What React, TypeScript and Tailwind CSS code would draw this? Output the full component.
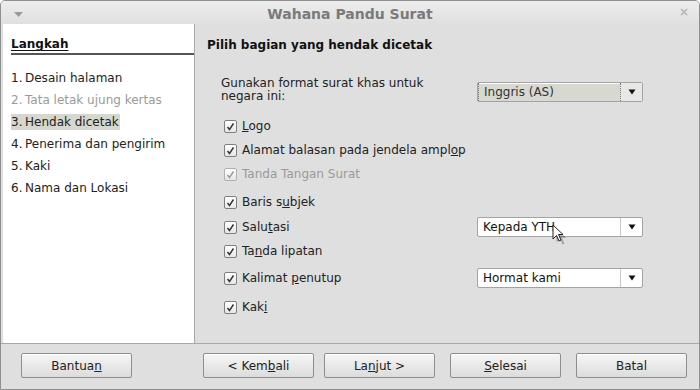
import React from "react";

const steps = [
  { n: "1.", label: "Desain halaman" },
  { n: "2.", label: "Tata letak ujung kertas", disabled: true },
  { n: "3.", label: "Hendak dicetak", active: true },
  { n: "4.", label: "Penerima dan pengirim" },
  { n: "5.", label: "Kaki" },
  { n: "6.", label: "Nama dan Lokasi" },
];

const CheckBox: React.FC<{ disabled?: boolean }> = ({ disabled }) => (
  <span
    className={`flex h-[13px] w-[13px] shrink-0 items-center justify-center rounded-[2px] border bg-gradient-to-b from-white to-[#e6e6e6] ${
      disabled ? "border-[#b0b0b0]" : "border-[#7f7f7f]"
    }`}
  >
    <svg width="9" height="9" viewBox="0 0 9 9">
      <path
        d="M1.5 5 L3.5 7.5 L7.5 1.5"
        fill="none"
        stroke={disabled ? "#9a9a9a" : "#333"}
        strokeWidth="1.4"
      />
    </svg>
  </span>
);

const Row: React.FC<{ children: React.ReactNode; disabled?: boolean; className?: string; right?: React.ReactNode }> = ({
  children,
  disabled,
  className = "",
  right,
}) => (
  <div className={`flex items-center ${className}`}>
    <div className="flex w-[256px] shrink-0 items-center gap-[5px] whitespace-nowrap pl-[17px]">
      <CheckBox disabled={disabled} />
      <span className={disabled ? "text-[#9a9a9a]" : "text-[#222]"}>{children}</span>
    </div>
    {right}
  </div>
);

const Combo: React.FC<{ value: string; tinted?: boolean }> = ({ value, tinted }) => (
  <div
    className={`flex h-[20px] w-[166px] items-stretch rounded-[2px] border border-[#a3a3a3] shadow-[inset_0_1px_0_#fff] ${
      tinted ? "bg-[#d7d9d1]" : "bg-white"
    }`}
  >
    <div
      className={`flex flex-1 items-center pl-[5px] ${
        tinted ? "border-l border-dotted border-[#777] pl-[2px] text-[#333]" : "text-[#111]"
      }`}
    >
      {value}
    </div>
    <div
      className={`flex w-[22px] items-center justify-center border-l ${
        tinted ? "border-dotted border-[#777] bg-[#e8e8e6]" : "border-[#c8c8c8]"
      }`}
    >
      <svg width="8" height="6" viewBox="0 0 8 6">
        <path d="M0.5 0.5 H7.5 L4 5.5 Z" fill="#111" />
      </svg>
    </div>
  </div>
);

const Btn: React.FC<{ children: React.ReactNode; className?: string }> = ({ children, className = "" }) => (
  <button
    className={`flex h-[25px] w-[111px] items-center justify-center rounded-[2px] border border-[#8e8e8e] bg-gradient-to-b from-[#f6f6f6] to-[#dcdcdc] text-[#222] shadow-[inset_0_1px_0_#fff] ${className}`}
  >
    {children}
  </button>
);

export default function App() {
  return (
    <div
      className="relative flex h-[390px] w-[700px] flex-col overflow-hidden rounded-t-[5px] border border-[#8f8f8f] bg-[#dfdfdf] text-[12px] leading-none"
      style={{ fontFamily: '"DejaVu Sans", "Liberation Sans", sans-serif' }}
    >
      {/* title bar */}
      <div className="relative flex h-[23px] shrink-0 items-center justify-center bg-gradient-to-b from-[#ededed] to-[#e0e0e0]">
        <svg className="absolute left-[13px] top-[11px]" width="9" height="5" viewBox="0 0 9 5">
          <path d="M0 0 H9 L4.5 5 Z" fill="#9a9a9a" />
        </svg>
        <span className="pt-[2px] text-[14px] font-bold text-[#7a7a7a]">Wahana Pandu Surat</span>
        <span className="absolute right-[10px] top-[5px] text-[12px] font-bold text-[#b5b5b5]">×</span>
      </div>

      {/* body */}
      <div className="flex h-[319px] shrink-0 pl-[2px]">
        {/* steps */}
        <div className="flex w-[192px] shrink-0 flex-col border-r border-[#a8a8a8] bg-white pl-[8px]">
          <div className="mt-[14px] border-b-2 border-[#555] pb-[3px] font-bold text-[#111] underline underline-offset-2 decoration-1">
            Langkah
          </div>
          <div className="mt-[15px] flex flex-col gap-[6px]">
            {steps.map((s) => (
              <div
                key={s.n}
                className={`flex h-[16px] w-fit items-center pr-[1px] ${
                  s.active ? "bg-[#d6d8d0]" : ""
                } ${s.disabled ? "text-[#9a9a9a]" : "text-[#222]"}`}
              >
                <span className="w-[14px]">{s.n}</span>
                <span>{s.label}</span>
              </div>
            ))}
          </div>
        </div>

        {/* content */}
        <div className="flex flex-1 flex-col pl-[12px]">
          <div className="mt-[15px] font-bold text-[#111]">Pilih bagian yang hendak dicetak</div>
          <div className="mt-[26px] flex items-start">
            <div className="w-[270px] pl-[14px] leading-[13px] text-[#222]">
              Gunakan format surat khas untuk
              <br />
              negara ini:
            </div>
            <div className="mt-[5px]">
              <Combo value="Inggris (AS)" tinted />
            </div>
          </div>
          <div className="mt-[15px] flex flex-col">
            <Row className="h-[16px]">
              <u>L</u>ogo
            </Row>
            <Row className="mt-[8px] h-[16px]">
              Alamat balasan pada jendela ampl<u>o</u>p
            </Row>
            <Row className="mt-[8px] h-[16px]" disabled>
              Tanda Tangan Surat
            </Row>
            <Row className="mt-[12px] h-[16px]">
              Baris s<u>u</u>bjek
            </Row>
            <Row
              className="mt-[9px] h-[16px]"
              right={
                <div className="ml-[14px]">
                  <Combo value="Kepada YTH" />
                </div>
              }
            >
              Salu<u>t</u>asi
            </Row>
            <Row className="mt-[8px] h-[16px]">
              Ta<u>n</u>da lipatan
            </Row>
            <Row
              className="mt-[11px] h-[16px]"
              right={
                <div className="ml-[14px]">
                  <Combo value="Hormat kami" />
                </div>
              }
            >
              Kalimat <u>p</u>enutup
            </Row>
            <Row className="mt-[13px] h-[16px]">
              Kak<u>i</u>
            </Row>
          </div>
        </div>
      </div>

      {/* footer */}
      <div className="flex flex-1 items-start border-t border-[#a8a8a8] pt-[9px]">
        <Btn className="ml-[20px]">
          Bantua<u>n</u>
        </Btn>
        <Btn className="ml-[71px]">
          &lt; Kem<u>b</u>ali
        </Btn>
        <Btn className="ml-[10px] w-[110px]">
          La<u>n</u>jut &gt;
        </Btn>
        <Btn className="ml-[15px]">
          <u>S</u>elesai
        </Btn>
        <Btn className="ml-[15px]">Batal</Btn>
      </div>

      {/* mouse pointer */}
      <svg className="absolute left-[551px] top-[223px]" width="16" height="22" viewBox="0 0 16 22">
        <path d="M3 3 L3 17 L6.5 13.5 L9 19 L11 18 L8.5 12.5 L13 12.5 Z" fill="#000" opacity="0.25" transform="translate(1.5 1.5)" />
        <path d="M1 1 L1 15 L4.5 11.5 L7 17 L9 16 L6.5 10.5 L11 10.5 Z" fill="#fff" stroke="#222" strokeWidth="1" strokeLinejoin="round" />
      </svg>
    </div>
  );
}
